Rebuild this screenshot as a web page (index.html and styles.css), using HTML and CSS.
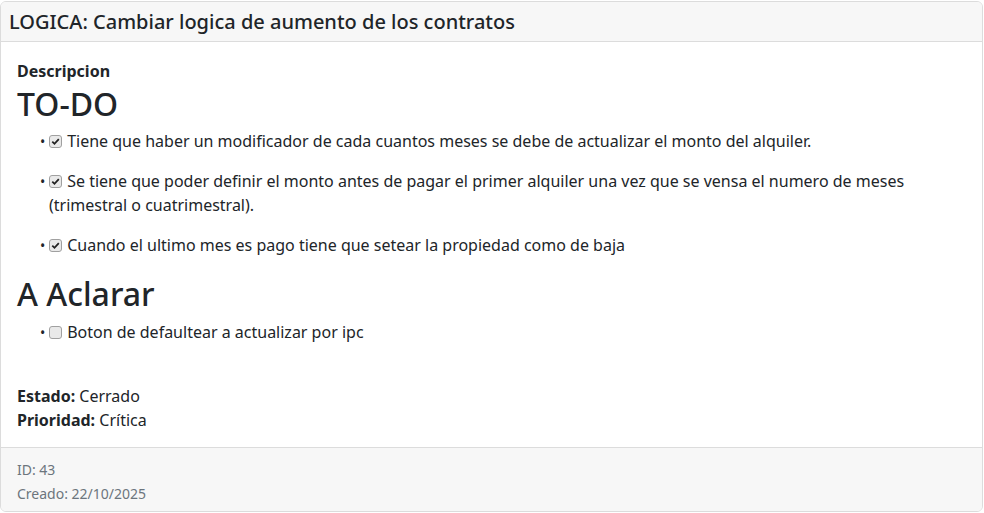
FILE: index.html
```html
<!DOCTYPE html>
<html lang="es">
<head>
<meta charset="utf-8">
<title>Tarea</title>
<link rel="stylesheet" href="styles.css">
</head>
<body>
<div class="card">
  <div class="card-header">
    <h5 class="card-title">LOGICA: Cambiar logica de aumento de los contratos</h5>
  </div>
  <div class="card-body">
    <div class="label">Descripcion</div>
    <div class="markdown">
      <h1>TO-DO</h1>
      <ul>
        <li><p><input type="checkbox" checked disabled> Tiene que haber un modificador de cada cuantos meses se debe de actualizar el monto del alquiler.</p></li>
        <li><p><input type="checkbox" checked disabled> Se tiene que poder definir el monto antes de pagar el primer alquiler una vez que se vensa el numero de meses (trimestral o cuatrimestral).</p></li>
        <li><p><input type="checkbox" checked disabled> Cuando el ultimo mes es pago tiene que setear la propiedad como de baja</p></li>
      </ul>
      <h1>A Aclarar</h1>
      <ul>
        <li><p><input type="checkbox" disabled> Boton de defaultear a actualizar por ipc</p></li>
      </ul>
    </div>
    <div class="meta"><strong>Estado:</strong> Cerrado</div>
    <div class="meta"><strong>Prioridad:</strong> Crítica</div>
  </div>
  <div class="card-footer">
    <div><small>ID: 43</small></div>
    <div><small>Creado: 22/10/2025</small></div>
  </div>
</div>
</body>
</html>
```
FILE: styles.css
```css
* { box-sizing: border-box; }
html, body { margin: 0; padding: 0; }
body {
  font-family: "Noto Sans", sans-serif;
  font-size: 16px;
  line-height: 1.5;
  color: #212529;
  background: #fff;
}
.card {
  width: 983px;
  margin-top: 1px;
  border: 1px solid #dcdcdc;
  border-radius: 6px;
  overflow: hidden;
}
.card-header {
  background: #f7f7f7;
  border-bottom: 1px solid #dcdcdc;
  padding: 0 8px;
  height: 40px;
  display: flex;
  align-items: center;
}
.card-title {
  margin: 0;
  font-size: 20px;
  font-weight: 500;
  line-height: 1.2;
}
.card-body {
  padding: 17px 16px 15px;
}
.label { font-weight: 700; font-size: 16px; }
.markdown h1 {
  margin: 0 0 6px;
  padding-top: 2px;
  font-size: 32px;
  font-weight: 500;
  line-height: 1.2;
}
.markdown ul {
  margin: 0 0 16px;
  padding-left: 32px;
}
.markdown li::marker {
  content: "• ";
  font-size: 14px;
}
.markdown li p {
  margin: 0 0 16px;
  font-size: 16px;
  line-height: 24px;
}
.markdown input[type="checkbox"] {
  -webkit-appearance: none;
  appearance: none;
  margin: 0 1px 0 0;
  width: 13px;
  height: 13px;
  border: 1px solid #a0a0a0;
  border-radius: 3px;
  background-color: #e9e9e9;
  vertical-align: -1px;
}
.markdown input[type="checkbox"]:checked {
  background-image: url("data:image/svg+xml,%3Csvg xmlns='http://www.w3.org/2000/svg' viewBox='0 0 11 11'%3E%3Cpath d='M2.3 5.6 L4.5 7.8 L8.8 3.2' fill='none' stroke='%23222' stroke-width='1.8'/%3E%3C/svg%3E");
  background-size: 11px 11px;
  background-repeat: no-repeat;
  background-position: center;
}
.markdown { margin-bottom: 40px; }
.meta { font-size: 16px; line-height: 24px; }
.card-footer {
  background: #f7f7f7;
  border-top: 1px solid #dcdcdc;
  padding: 9px 16px 6px;
  color: #6c757d;
}
.card-footer small { font-size: 14px; }
```
